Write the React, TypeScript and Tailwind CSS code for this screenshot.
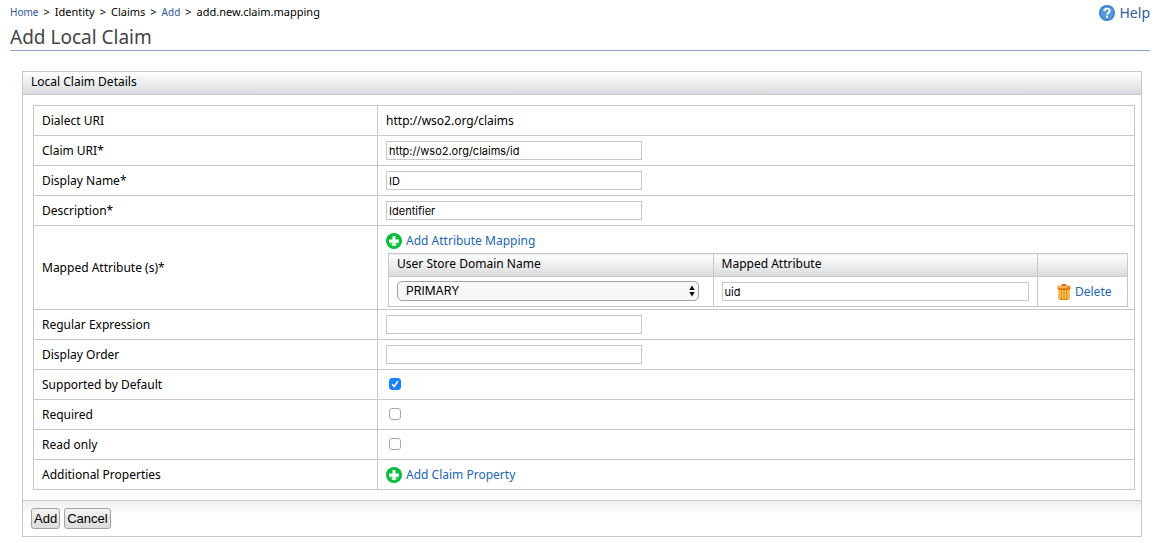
import { useState, type ReactNode } from "react";

function PlusIcon() {
  return (
    <svg width="16" height="16" viewBox="0 0 16 16" className="shrink-0" aria-hidden="true">
      <circle cx="8" cy="8" r="8" fill="#05bd3b" />
      <path d="M2.6 8a5.4 5.4 0 0 0 10.8 0z" fill="#45ce65" />
      <path d="M6.5 3h3v3.5H13v3H9.5V13h-3V9.5H3v-3h3.5z" fill="#fff" />
      <path d="M6.5 9.5h3V13h-3z" fill="#e2f8e7" />
    </svg>
  );
}

function HelpIcon() {
  return (
    <svg width="16" height="16" viewBox="0 0 16 16" className="shrink-0" aria-hidden="true">
      <circle cx="8" cy="8" r="8" fill="#3580c8" />
      <circle cx="8" cy="8" r="6.6" fill="#5499dc" />
      <path
        d="M5.3 6.1C5.4 4.5 6.5 3.6 8 3.6c1.6 0 2.7.9 2.7 2.2 0 1.900-2.500 1.900-2.600 3.800"
        fill="none"
        stroke="#fff"
        strokeWidth="1.9"
      />
      <rect x="7.1" y="10.7" width="2" height="2" fill="#fff" />
    </svg>
  );
}

function TrashIcon() {
  return (
    <svg width="14" height="16" viewBox="0 0 14 16" className="shrink-0" aria-hidden="true">
      <path d="M4.500 0h5v2h-5z" fill="#e07408" />
      <path d="M.5 1.800h13v3.400H.5z" fill="#ee8413" />
      <path d="M1 2.400h9v1.400H1z" fill="#fbc58a" />
      <path d="M1.500 5.200h11V14l-1.500 2H3l-1.500-2z" fill="#e9860f" />
      <path d="M3 6v8.500M5.700 6v9M8.400 6v9M11 6v8.500" stroke="#fbd25c" strokeWidth="1.3" />
      <path d="M1.500 5.200h11v.8h-11z" fill="#c96a06" />
    </svg>
  );
}

function IconLink({ icon, children }: { icon: ReactNode; children: ReactNode }) {
  return (
    <a href="#" className="flex w-fit items-center gap-1 pt-px text-[#2166b3]">
      {icon}
      <span>{children}</span>
    </a>
  );
}

function TextField({ id, label, value, wide }: { id: string; label?: string; value: string; wide?: boolean }) {
  const [text, setText] = useState(value);
  return (
    <input
      id={id}
      type="text"
      aria-label={label}
      value={text}
      onChange={(e) => setText(e.target.value)}
      className={
        "block h-[19px] border border-[#c8c8c8] bg-white px-0.5 font-['Inter',sans-serif] text-[11px] leading-4 text-black " +
        (wide ? "w-full" : "w-64")
      }
    />
  );
}

function Tick({ id, initial }: { id: string; initial?: boolean }) {
  const [on, setOn] = useState(!!initial);
  return (
    <span className="mb-0.5 ml-[3px] grid size-3">
      <input
        id={id}
        type="checkbox"
        checked={on}
        onChange={(e) => setOn(e.target.checked)}
        className="col-start-1 row-start-1 size-3 appearance-none rounded-[3px] border border-[#a9a9a9] bg-white checked:border-[#1a82fb] checked:bg-[#1a82fb]"
      />
      {on && (
        <svg viewBox="0 0 12 12" className="pointer-events-none col-start-1 row-start-1 size-3" aria-hidden="true">
          <path d="M3.200 6.300l2 2.200 3.600-5.200" fill="none" stroke="#fff" strokeWidth="1.6" />
        </svg>
      )}
    </span>
  );
}

function Row({ label, htmlFor, children }: { label: string; htmlFor?: string; children: ReactNode }) {
  return (
    <tr className="h-[30px]">
      <th scope="row" className="border border-[#c8c8c8] px-2 text-left font-normal">
        {htmlFor ? <label htmlFor={htmlFor}>{label}</label> : label}
      </th>
      <td className="border border-[#c8c8c8] pl-2 pr-1.5">{children}</td>
    </tr>
  );
}

function MappingTable() {
  const head =
    "h-[23px] border border-[#c8c8c8] bg-linear-to-b from-white to-[#d8dbdd] px-2 pb-0.5 text-left font-normal";
  return (
    <table className="ml-0.5 w-[calc(100%-2px)] table-fixed border-collapse">
      <colgroup>
        <col />
        <col />
        <col className="w-[90px]" />
      </colgroup>
      <thead>
        <tr>
          <th className={head}>User Store Domain Name</th>
          <th className={head}>Mapped Attribute</th>
          <th className={head} aria-label="Actions" />
        </tr>
      </thead>
      <tbody>
        <tr className="h-[30px]">
          <td className="border border-[#c8c8c8] pb-px pl-2 pr-3.5">
            <span className="grid items-center">
              <select
                aria-label="User Store Domain Name"
                className="col-start-1 row-start-1 h-5 w-full appearance-none rounded-[5px] border border-[#a3a3a3] bg-[#f7f7f7] pl-2 font-['Inter',sans-serif] text-[12px] leading-4 text-black"
              >
                <option>PRIMARY</option>
              </select>
              <svg
                width="6"
                height="12"
                viewBox="0 0 6 12"
                className="pointer-events-none col-start-1 row-start-1 mr-1 justify-self-end"
                aria-hidden="true"
              >
                <path d="M3 .5L5.800 5H.2zM3 11.500L.2 7h5.600z" fill="#111" />
              </svg>
            </span>
          </td>
          <td className="border border-[#c8c8c8] px-2">
            <TextField id="mapped-attribute" label="Mapped Attribute" value="uid" wide />
          </td>
          <td className="border border-[#c8c8c8] pl-[19px]">
            <IconLink icon={<TrashIcon />}>Delete</IconLink>
          </td>
        </tr>
      </tbody>
    </table>
  );
}

const buttonClass =
  "h-[21px] rounded-[3px] border border-[#a2a2a2] bg-linear-to-b from-[#f3f3f3] to-[#dcdcdc] px-0.5 font-['Liberation_Sans',sans-serif] text-[13px] leading-4 text-black";

export default function App() {
  return (
    <div className="bg-white pb-1.5 pl-2.5 pr-3 font-['Noto_Sans','Open_Sans',sans-serif] text-[12px] leading-4 text-black">
      <header className="flex items-start justify-between border-b border-[#8aa4cc] pt-1">
        <div>
          <nav aria-label="Breadcrumb" className="flex items-baseline gap-[5px] text-[11px]">
            <a href="#" className="text-[10px] text-[#2f5597]">Home</a>
            <span>&gt;</span>
            <span>Identity</span>
            <span>&gt;</span>
            <span>Claims</span>
            <span>&gt;</span>
            <a href="#" className="text-[10px] text-[#2f5597]">Add</a>
            <span>&gt;</span>
            <span>add.new.claim.mapping</span>
          </nav>
          <h1 className="pb-px pt-[5px] text-[19px] leading-6 text-[#444]">Add Local Claim</h1>
        </div>
        <a href="#" className="flex items-center gap-[5px] pt-px text-[14px] text-[#2f5c9e]">
          <HelpIcon />
          <span>Help</span>
        </a>
      </header>

      <form className="ml-3 mr-2 mt-5 border border-[#c8c8c8]" onSubmit={(e) => e.preventDefault()}>
        <h2 className="h-[23px] border-b border-[#c8c8c8] bg-linear-to-b from-white to-[#d8dbdd] px-2 pt-0.5">
          Local Claim Details
        </h2>
        <div className="pb-2.5 pl-2.5 pr-1.5 pt-2.5">
          <table className="w-full table-fixed border-collapse">
            <colgroup>
              <col className="w-[31.25%]" />
              <col />
            </colgroup>
            <tbody>
              <Row label="Dialect URI">http://wso2.org/claims</Row>
              <Row label="Claim URI*" htmlFor="claim-uri">
                <TextField id="claim-uri" value="http://wso2.org/claims/id" />
              </Row>
              <Row label="Display Name*" htmlFor="display-name">
                <TextField id="display-name" value="ID" />
              </Row>
              <Row label="Description*" htmlFor="description">
                <TextField id="description" value="Identifier" />
              </Row>
              <Row label="Mapped Attribute (s)*">
                <div className="flex flex-col gap-1 pb-0.5 pt-1.5">
                  <IconLink icon={<PlusIcon />}>Add Attribute Mapping</IconLink>
                  <MappingTable />
                </div>
              </Row>
              <Row label="Regular Expression" htmlFor="regex">
                <TextField id="regex" value="" />
              </Row>
              <Row label="Display Order" htmlFor="display-order">
                <TextField id="display-order" value="" />
              </Row>
              <Row label="Supported by Default" htmlFor="supported">
                <Tick id="supported" initial />
              </Row>
              <Row label="Required" htmlFor="required">
                <Tick id="required" />
              </Row>
              <Row label="Read only" htmlFor="read-only">
                <Tick id="read-only" />
              </Row>
              <Row label="Additional Properties">
                <IconLink icon={<PlusIcon />}>Add Claim Property</IconLink>
              </Row>
            </tbody>
          </table>
        </div>
        <div className="flex gap-1 border-t border-[#c8c8c8] bg-linear-to-b from-[#eeeeee] to-white to-40% px-2 py-[7px]">
          <button type="submit" className={buttonClass}>Add</button>
          <button type="button" className={buttonClass}>Cancel</button>
        </div>
      </form>
    </div>
  );
}
